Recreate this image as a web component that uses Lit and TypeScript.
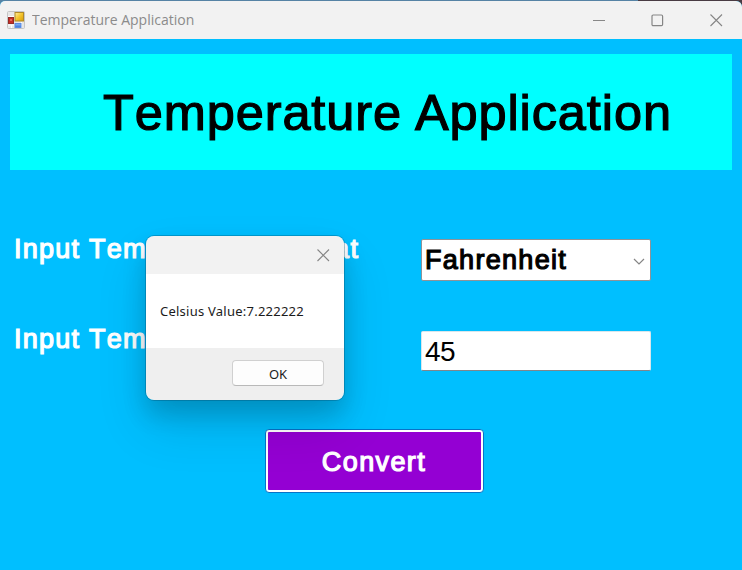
import { LitElement, html, css, svg } from "lit";
import { customElement } from "lit/decorators.js";

const closeIcon = svg`<path d="M.5 .5L12 12M12 .5L.5 12" fill="none" stroke="#858585" stroke-width="1.1"/>`;

@customElement("app-root")
export class AppRoot extends LitElement {
  static styles = css`
    * { box-sizing: border-box; }
    :host {
      display: block; width: 742px; height: 570px; overflow: hidden; position: relative;
      background: linear-gradient(90deg, #5683a5 0 638px, #493b43 638px);
      font-family: "Liberation Sans", Arial, sans-serif; font-kerning: none;
    }
    svg { display: block; }
    .window {
      margin-top: 1px; height: 569px; border-radius: 5px 6px 0 0; overflow: hidden;
      background: #00bfff; display: flex; flex-direction: column;
    }
    .titlebar {
      height: 38px; flex: none; background: #f2f2f2; display: flex; align-items: center;
      padding: 0 19px 0 7px;
    }
    .caption {
      flex: 1; margin-left: 7px; color: #8b8b8b; font: 14.5px/20px "Open Sans", "Noto Sans", sans-serif;
      white-space: nowrap; font-kerning: auto;
    }
    .caption span { display: inline-block; transform-origin: 0 50%; transform: scaleX(.965); }
    .controls { display: flex; align-items: center; gap: 46px; }
    .banner {
      margin: 15px 10px 0 10px; height: 116px; flex: none; background: #0ff; color: #000;
      padding: 29px 0 0 93px; font-size: 50.5px; line-height: 60px; white-space: nowrap;
      -webkit-text-stroke: 1.2px #000; letter-spacing: .9px; word-spacing: -2px;
    }
    .form { flex: none; padding: 69px 91px 0 14px; display: flex; flex-direction: column; gap: 50px; }
    .row { display: flex; justify-content: space-between; height: 42px; }
    .label {
      color: #fff; font-size: 27px; line-height: 32px; white-space: nowrap;
      margin-top: -6px; letter-spacing: 1.25px; -webkit-text-stroke: 1.2px #fff;
    }
    .row + .row .label { margin-top: -8px; }
    .field {
      width: 230px; background: #fff; color: #000; border: 1px solid #8f9398; border-radius: 2px;
      font-size: 28px; line-height: 38px; padding-left: 3px; flex: none;
    }
    .select {
      display: flex; justify-content: space-between; padding-right: 5px;
      font-size: 27px; line-height: 40px; letter-spacing: 1.3px; -webkit-text-stroke: 1.2px #000;
    }
    .select svg { margin-top: 18px; }
    .input { height: 40px; border-color: #d8e6ec #d8e6ec #80868c; line-height: 39px; letter-spacing: -.5px; }
    .convert {
      align-self: flex-start; flex: none; margin: 56px 0 0 265px; width: 219px; height: 64px;
      border: 1px solid #0872c8; border-radius: 4px; background: #fff; padding: 2px; display: flex;
    }
    .face {
      flex: 1; background: #9400d3; color: #fff; font-size: 27px; -webkit-text-stroke: 1.2px #fff;
      line-height: 61px; text-align: center; padding-right: 1px; border-radius: 1px; letter-spacing: 1.4px;
    }
    .dialog {
      position: absolute; left: 146px; top: 236px; width: 198px; height: 164px;
      border-radius: 8px; display: flex; flex-direction: column;
      box-shadow: 0 0 0 1px rgba(0,65,95,.3), 0 14px 24px rgba(0,0,0,.16), 0 26px 52px rgba(0,0,0,.12);
      font: 13px/18px "Noto Sans", sans-serif; color: #1b1b1b;
    }
    .dialog-bar {
      height: 38px; background: #f2f2f2; border-radius: 8px 8px 0 0; display: flex;
      justify-content: flex-end; padding: 13px 14px 0 0;
    }
    .message { height: 74px; background: #fff; padding: 28px 0 0 14px; white-space: nowrap; letter-spacing: .24px; }
    .actions {
      height: 52px; background: #efefef; border-radius: 0 0 8px 8px; display: flex;
      justify-content: flex-end; padding: 12px 20px 0 0;
    }
    .ok {
      width: 92px; height: 26px; background: #fdfdfd; border: 1px solid #d0d0d0;
      border-bottom-color: #b9b9b9; border-radius: 4px; text-align: center; line-height: 26px;
    }
  `;

  render() {
    return html`
      <div class="window">
        <div class="titlebar">
          <svg width="18" height="18" viewBox="0 0 18 18">
            <defs>
              <linearGradient id="y" x2="1" y2="1"><stop stop-color="#fff0a0"/><stop offset=".5" stop-color="#f4c52c"/><stop offset="1" stop-color="#d59a0b"/></linearGradient>
              <linearGradient id="b" x2="0" y2="1"><stop stop-color="#8db9fa"/><stop offset="1" stop-color="#3a72db"/></linearGradient>
            </defs>
            <rect x=".5" y=".5" width="17" height="17" rx="1" fill="#e7e7e7" stroke="#c5c5c5"/>
            <path d="M1 5.5h6M1 14h6M4.5 14v3M14.5 11v6" stroke="#fff" fill="none"/>
            <rect x="8" y="1.5" width="8.5" height="8.5" fill="url(#y)" stroke="#b18a27"/>
            <rect x="1.5" y="6.5" width="5" height="6" fill="#c72d25" stroke="#942b26"/>
            <rect x="3" y="8" width="2" height="2" fill="#e0665c"/>
            <rect x="8" y="12.5" width="6" height="4" fill="url(#b)" stroke="#5b8ce2"/>
          </svg>
          <div class="caption"><span>Temperature Application</span></div>
          <div class="controls">
            <svg width="13" height="13"><path d="M1 6.5h12" stroke="#888"/></svg>
            <svg width="13" height="13"><rect x="1" y="1" width="10.6" height="10.6" rx="1.2" fill="none" stroke="#858585" stroke-width="1.2"/></svg>
            <svg width="13" height="13">${closeIcon}</svg>
          </div>
        </div>
        <div class="banner">Temperature Application</div>
        <div class="form">
          <div class="row">
            <div class="label">Input Temperature Format</div>
            <div class="field select">Fahrenheit
              <svg width="12" height="8"><path d="M1 1l5 5 5-5" fill="none" stroke="#858585" stroke-width="1.2"/></svg>
            </div>
          </div>
          <div class="row">
            <div class="label">Input Temperature</div>
            <div class="field input">45</div>
          </div>
        </div>
        <div class="convert"><div class="face">Convert</div></div>
      </div>
      <div class="dialog">
        <div class="dialog-bar"><svg width="13" height="13">${closeIcon}</svg></div>
        <div class="message">Celsius Value:7.222222</div>
        <div class="actions"><div class="ok">OK</div></div>
      </div>
    `;
  }
}
